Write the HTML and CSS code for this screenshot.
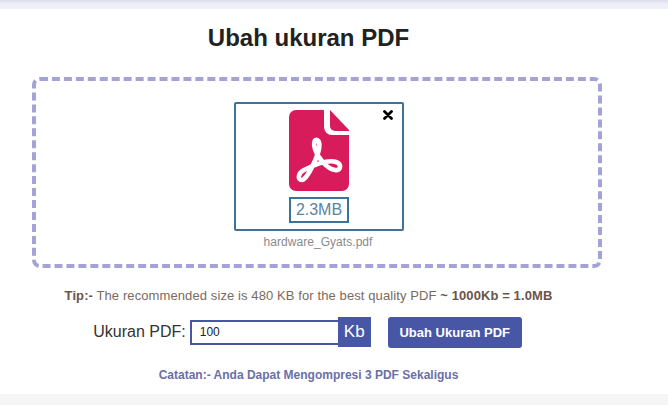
FILE: index.html
```html
<!DOCTYPE html>
<html lang="id">
<head>
<meta charset="utf-8">
<title>Ubah ukuran PDF</title>
<link rel="stylesheet" href="styles.css">
</head>
<body>
<div class="topband"></div>
<main class="page">
  <h1 class="title">Ubah ukuran PDF</h1>
  <section class="dropzone">
    <div class="card">
      <span class="close">
        <svg viewBox="0 0 10 10" width="10" height="10"><path d="M1.5 1.5 8.5 8.5M8.5 1.5 1.5 8.5" stroke="#000" stroke-width="2.8" stroke-linecap="round" fill="none"/></svg>
      </span>
      <svg class="pdf" viewBox="0 0 60 81" width="60" height="81">
        <path d="M7 0H35V17a8 8 0 0 0 8 8H60V74a7 7 0 0 1-7 7H7a7 7 0 0 1-7-7V7a7 7 0 0 1 7-7Z" fill="#d81b5a"/>
        <path d="M41 0 60 20V21H46a5 5 0 0 1-5-5Z" fill="#d81b5a"/>
        <path d="M13 70C8 70 9 63 15 60 25 55 38 49 47 52 53 54 52 61 46 60 38 59 29 48 26 39 24 32 26 29 28 30 31 31 31 37 29 43 26 52 20 64 16 68 15 69 14 70 13 70Z" fill="none" stroke="#fff" stroke-width="4.6" stroke-linejoin="round"/>
      </svg>
      <div class="size">2.3MB</div>
    </div>
    <div class="filename">hardware_Gyats.pdf</div>
  </section>
  <p class="tip"><b>Tip:-</b> The recommended size is 480 KB for the best quality PDF <b>~ 1000Kb = 1.0MB</b></p>
  <form class="controls">
    <label class="label" for="size">Ukuran PDF:</label>
    <input class="input" id="size" type="text" value="100">
    <span class="unit">Kb</span>
    <button class="submit" type="button">Ubah Ukuran PDF</button>
  </form>
  <p class="note">Catatan:- Anda Dapat Mengompresi 3 PDF Sekaligus</p>
</main>
<div class="footer"></div>
</body>
</html>
```
FILE: styles.css
```css
* { box-sizing: border-box; }
html, body { margin: 0; padding: 0; height: 100%; overflow: hidden; background: #fff; }
body { display: flex; flex-direction: column; font-family: "Liberation Sans", Arial, sans-serif; }
.topband { height: 9px; flex: none; background: linear-gradient(#dcdcea, #eeeef9 45%, #f0f0fa); }
.page { width: 617px; flex: none; height: 385px; display: flex; flex-direction: column; align-items: center; }
.title { margin: 15px 0 0; height: 39px; font-size: 24px; line-height: 28px; font-weight: 700; color: #222; }
.dropzone {
  align-self: flex-start; margin: 14px 0 0 32px; width: 570px; height: 191px;
  border: 4px dashed #a3a3d9; border-radius: 8px;
  display: flex; flex-direction: column; align-items: center; padding: 21px 0 0 4px;
}
.card {
  position: relative; width: 170px; height: 129px; border: 2px solid #3f7296; border-radius: 2px;
  display: flex; flex-direction: column; align-items: center; padding-top: 6px;
}
.pdf { display: block; flex: none; }
.close { position: absolute; top: 6px; right: 9px; width: 10px; height: 10px; display: block; }
.close svg { display: block; }
.size {
  margin-top: 6px; width: 60px; height: 26px; border: 2px solid #3f7296; color: #5a84a4;
  font-size: 16px; line-height: 22px; text-align: center;
}
.filename { margin-top: 4px; margin-left: -2px; letter-spacing: .05px; font-size: 12px; line-height: 14px; color: #8a8a8a; }
.tip { margin: 21px 0 0; font-size: 13px; letter-spacing: .1px; line-height: 14px; color: #7a6a5e; white-space: nowrap; }
.tip b { color: #6b5548; }
.controls { display: flex; align-items: center; margin: 13px 0 0 -2px; height: 32px; }
.label { font-size: 16px; color: #333; margin-right: 4px; }
.input {
  width: 148px; height: 25px; border: 2px solid #4856a6; padding: 0 8px; font: 12px "Liberation Sans", Arial, sans-serif;
  color: #222; background: #fff; outline: none; border-right: 0;
}
.unit {
  width: 33px; height: 30px; background: #4856a6; color: #fff; font-size: 17px; line-height: 30px; text-align: center;
}
.submit {
  margin-left: 17px; width: 134px; height: 31px; border: 0; border-radius: 3px; background: #4856a6; color: #fff;
  font: 700 13px "Liberation Sans", Arial, sans-serif; padding: 0;
}
.note { margin: 20px 0 0; font-size: 12px; line-height: 14px; font-weight: 700; color: #6a6fa8; white-space: nowrap; }
.footer { flex: 1; background: #f5f5f5; }
```
